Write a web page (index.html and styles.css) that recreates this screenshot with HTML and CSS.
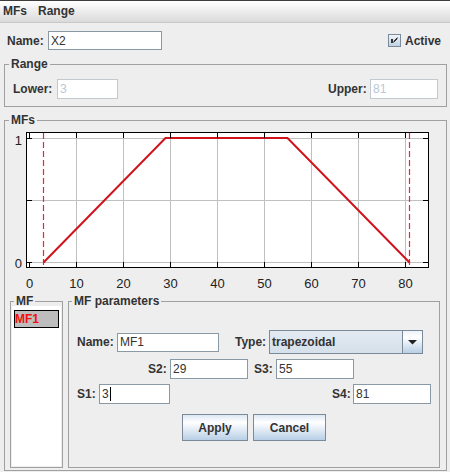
FILE: index.html
```html
<!DOCTYPE html>
<html>
<head>
<meta charset="utf-8">
<link rel="stylesheet" href="styles.css">
</head>
<body>
<div class="menubar"><span>MFs</span><span>Range</span></div>

<div class="name-row">
  <span class="lbl w-name">Name:</span>
  <div class="field name-field">X2</div>
  <div class="spacer"></div>
  <svg class="cb" width="13" height="13" viewBox="0 0 13 13">
    <defs><linearGradient id="cbg" x1="0" y1="0" x2="0" y2="1"><stop offset="0" stop-color="#f2f6fa"/><stop offset="1" stop-color="#bccfe2"/></linearGradient></defs>
    <rect x="0.5" y="0.5" width="12" height="12" fill="url(#cbg)" stroke="#7a8a99"/>
    <rect x="3" y="5" width="2" height="4" fill="#333"/>
    <path d="M9.5 3.5L5.5 7.5M9.5 4.5L5.5 8.5" stroke="#333" stroke-width="1" fill="none"/>
  </svg>
  <span class="lbl">Active</span>
</div>

<fieldset class="group range">
  <legend>Range</legend>
  <div class="range-row">
    <span class="lbl w-lower">Lower:</span>
    <div class="field disabled w-lowerf">3</div>
    <div class="spacer"></div>
    <span class="lbl w-upper">Upper:</span>
    <div class="field disabled w-upperf">81</div>
  </div>
</fieldset>

<fieldset class="group mfs">
  <legend>MFs</legend>
  <svg class="chart" width="441" height="166" viewBox="5 128 441 166">
    <rect x="26.5" y="132.5" width="402" height="135" fill="#ffffff"/>
    <path d="M76.5 133V267M123.5 133V267M170.5 133V267M217.5 133V267M264.5 133V267M311.5 133V267M358.5 133V267M405.5 133V267M27 138.5H428M27 200.5H428M27 262.5H428" stroke="#c0c0c0" stroke-width="1" fill="none"/>
    <line x1="43.5" y1="133" x2="43.5" y2="267" stroke="#ff1a40" stroke-width="1.2" stroke-dasharray="6 3"/>
    <line x1="409.5" y1="133" x2="409.5" y2="267" stroke="#ff1a40" stroke-width="1.2" stroke-dasharray="6 3"/>
    <polyline points="43.5,262.5 165.5,138 287.5,138 409.5,262.5" fill="none" stroke="#d0121c" stroke-width="2"/>
    <rect x="26.5" y="132.5" width="402" height="135" fill="none" stroke="#000"/>
    <path d="M29.5 267v-5M76.5 267v-5M123.5 267v-5M170.5 267v-5M217.5 267v-5M264.5 267v-5M311.5 267v-5M358.5 267v-5M405.5 267v-5M29.5 133v5M76.5 133v5M123.5 133v5M170.5 133v5M217.5 133v5M264.5 133v5M311.5 133v5M358.5 133v5M405.5 133v5M27 138.5h5M27 200.5h5M27 262.5h5M428 138.5h-5M428 200.5h-5M428 262.5h-5" stroke="#000" stroke-width="1" fill="none"/>
    <g class="ticks">
      <text x="22" y="145" text-anchor="end">1</text>
      <text x="22" y="268" text-anchor="end">0</text>
      <text x="29.5" y="288" text-anchor="middle">0</text>
      <text x="76.5" y="288" text-anchor="middle">10</text>
      <text x="123.5" y="288" text-anchor="middle">20</text>
      <text x="170.5" y="288" text-anchor="middle">30</text>
      <text x="217.5" y="288" text-anchor="middle">40</text>
      <text x="264.5" y="288" text-anchor="middle">50</text>
      <text x="311.5" y="288" text-anchor="middle">60</text>
      <text x="358.5" y="288" text-anchor="middle">70</text>
      <text x="405.5" y="288" text-anchor="middle">80</text>
    </g>
  </svg>

  <div class="mf-row">
    <fieldset class="group mf-box">
      <legend class="leg-small">MF</legend>
      <div class="mf-list"><div class="mf-item">MF1</div></div>
    </fieldset>
    <fieldset class="group params">
      <legend class="leg-small">MF parameters</legend>
      <div class="prow row1">
        <span class="lbl w-pname">Name:</span>
        <div class="field w-pnamef">MF1</div>
        <span class="lbl w-type">Type:</span>
        <div class="combo">
          <div class="combo-text">trapezoidal</div>
          <div class="combo-btn"><svg width="9" height="5" viewBox="0 0 9 5"><polygon points="0,0 9,0 4.5,4.5" fill="#222"/></svg></div>
        </div>
      </div>
      <div class="prow row2">
        <span class="lbl w-s">S2:</span>
        <div class="field w-sf">29</div>
        <span class="lbl w-s gap-s3">S3:</span>
        <div class="field w-sf">55</div>
      </div>
      <div class="prow row3">
        <span class="lbl w-s">S1:</span>
        <div class="field w-s1f">3<span class="caret"></span></div>
        <span class="lbl w-s4">S4:</span>
        <div class="field w-sf">81</div>
      </div>
      <div class="prow row4">
        <div class="btn w-apply">Apply</div>
        <div class="btn w-cancel">Cancel</div>
      </div>
    </fieldset>
  </div>
</fieldset>
</body>
</html>
```
FILE: styles.css
```css
* { box-sizing: border-box; }
html, body { margin: 0; padding: 0; }
body {
  width: 450px;
  height: 472px;
  overflow: hidden;
  background: #eeeeee;
  font-family: "Liberation Sans", Arial, sans-serif;
  font-size: 12px;
  color: #333333;
}

.menubar {
  height: 23px;
  border-top: 1px solid #3c3c3c;
  border-bottom: 1px solid #c8c8c8;
  background: linear-gradient(#ffffff, #dadada);
  display: flex;
  gap: 11px;
  padding-left: 3px;
  line-height: 21px;
  font-weight: bold;
  color: #333;
}

.lbl { font-weight: bold; white-space: nowrap; color: #333; }
.spacer { flex: 1; }

.field {
  background: #ffffff;
  border: 1px solid #8a99a6;
  padding-left: 2px;
  display: flex;
  align-items: center;
  color: #333;
  white-space: nowrap;
  height: 20px;
}
.field.disabled { border-color: #c2c9d0; color: #b8c8d8; }

.caret { display: inline-block; width: 1px; height: 14px; background: #000; margin-left: 1px; }

.name-row {
  display: flex;
  align-items: center;
  height: 19px;
  margin-top: 8px;
  padding: 0 9px 0 7px;
}
.w-name { width: 41px; }
.name-field { width: 114px; height: 19px; }
.cb { margin-right: 4px; display: block; }

fieldset.group {
  margin: 0;
  padding: 0;
  border: 1px solid #a0a0a0;
  min-width: 0;
}
fieldset.group > legend {
  margin-left: 4px;
  padding: 0 2px;
  line-height: 15px;
  font-weight: bold;
  color: #333;
}
fieldset.group > legend.leg-small { margin-left: 3px; }

fieldset.range { margin: 7px 3px 0 4px; }
.range-row {
  display: flex;
  align-items: center;
  padding: 7px 8px 7px 8px;
}
.w-lower { width: 44px; }
.w-lowerf { width: 61px; }
.w-upper { width: 42px; }
.w-upperf { width: 68px; }

fieldset.mfs { margin: 6px 3px 0 4px; padding-bottom: 2px; }
.chart { display: block; }
.ticks text { font-family: "Liberation Sans", Arial, sans-serif; font-size: 13px; fill: #222; }

.mf-row {
  display: flex;
  gap: 5px;
  padding: 0 6px 0 5px;
}
fieldset.mf-box { width: 53px; flex: none; }
.mf-list {
  background: #ffffff;
  margin: -3px 1px 1px 1px;
  height: 160px;
  padding: 4px 0 0 2px;
}
.mf-item {
  width: 45px;
  height: 18px;
  background: #bdbdbd;
  border: 1px solid #000;
  color: #f01010;
  font-weight: bold;
  line-height: 16px;
  padding-left: 0;
}
fieldset.params { flex: 1; }

.prow { display: flex; align-items: flex-start; }
.row1 { margin-top: 21px; height: 24px; padding-left: 8px; align-items: center; }
.row2 { margin-top: 5px; height: 20px; padding-left: 79px; align-items: center; }
.row3 { margin-top: 5px; height: 20px; padding-left: 8px; align-items: center; }
.row4 { margin-top: 10px; padding-left: 113px; gap: 5px; }

.w-pname { width: 40px; }
.w-pnamef { width: 102px; height: 19px; }
.w-type { width: 34px; margin-left: 16px; }
.w-s { width: 22px; }
.w-sf { width: 78px; }
.gap-s3 { margin-left: 6px; }
.w-s1f { width: 71px; }
.w-s4 { width: 21px; margin-left: 162px; }

.combo {
  width: 154px;
  height: 24px;
  border: 1px solid #7a8a99;
  display: flex;
}
.combo-text {
  flex: 1;
  background: linear-gradient(#e3eaf2, #d6e0ea);
  font-weight: bold;
  color: #333;
  padding-left: 2px;
  display: flex;
  align-items: center;
}
.combo-btn {
  width: 20px;
  border-left: 1px solid #7a8a99;
  background: linear-gradient(#eef3f8 0%, #ffffff 30%, #b8cfe5 100%);
  display: flex;
  align-items: center;
  justify-content: center;
}
.combo-btn svg { display: block; }

.btn {
  height: 27px;
  border: 1px solid #7a8a99;
  background: linear-gradient(#dde8f3 0%, #ffffff 30%, #b8cfe5 100%);
  font-weight: bold;
  color: #333;
  display: flex;
  align-items: center;
  justify-content: center;
}
.w-apply { width: 66px; }
.w-cancel { width: 73px; }
```
